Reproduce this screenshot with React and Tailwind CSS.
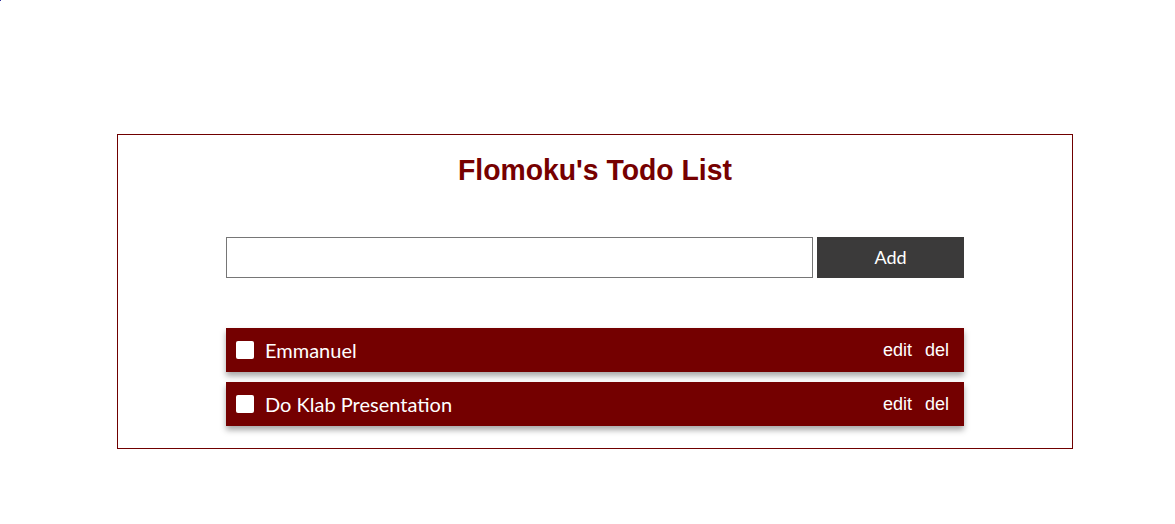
const todos = ['Emmanuel', 'Do Klab Presentation'];

export default function App() {
  return (
    <div className="relative min-h-[524px] bg-white pt-[134px]">
      <div className="absolute left-0 top-0 h-px w-px bg-[#3030a0]" />
      <div className="ml-[117px] w-[956px] border border-[#700000] pt-[16px] pb-[22px]">
        <h1
          className="text-center text-[30px] font-bold leading-[38px] text-[#760000]"
          style={{ fontFamily: '"Liberation Sans Narrow", "Arial Narrow", "Liberation Sans", Arial, sans-serif' }}
        >
          <span className="inline-block scale-x-[0.945]">Flomoku's Todo List</span>
        </h1>
        <div className="mx-auto mt-[48px] flex w-[738px] gap-[4px]">
          <input
            type="text"
            className="h-[41px] flex-1 border border-[#767676] bg-white px-2 outline-none"
          />
          <button
            className="h-[41px] w-[147px] bg-[#3b3a3a] text-[18px] text-white"
            style={{ fontFamily: '"Gill Sans", Lato, "Open Sans", sans-serif' }}
          >
            Add
          </button>
        </div>
        <div className="mx-auto mt-[50px] flex w-[738px] flex-col gap-[10px]">
          {todos.map((t) => (
            <div
              key={t}
              className="flex h-[44px] items-center bg-[#740000] pl-[10px] pr-[15px] shadow-[0_4px_6px_rgba(0,0,0,0.35)]"
            >
              <span className="h-[18px] w-[18px] rounded-[2px] bg-white" />
              <span
                className="ml-[11px] flex-1 text-[20px] text-white"
                style={{ fontFamily: '"Gill Sans", Lato, "Open Sans", sans-serif' }}
              >
                {t}
              </span>
              <span
                className="text-[18px] text-white"
                style={{ fontFamily: '"Liberation Sans", Arial, sans-serif' }}
              >
                edit
              </span>
              <span
                className="ml-[13px] text-[18px] text-white"
                style={{ fontFamily: '"Liberation Sans", Arial, sans-serif' }}
              >
                del
              </span>
            </div>
          ))}
        </div>
      </div>
    </div>
  );
}
